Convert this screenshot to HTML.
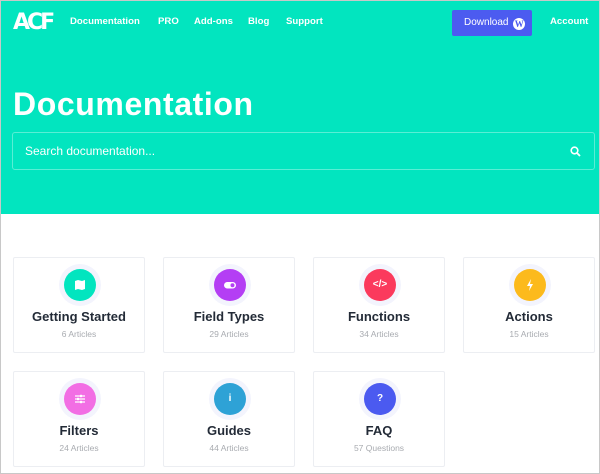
<!DOCTYPE html>
<html><head><meta charset="utf-8"><style>
*{box-sizing:border-box;margin:0;padding:0}
body{width:600px;height:474px;overflow:hidden;background:#fff;font-family:"Liberation Sans",sans-serif;position:relative}
.frame{position:absolute;inset:0;border:1px solid #c8c8c8;pointer-events:none;z-index:5}
.hero{position:absolute;left:0;top:0;width:600px;height:214px;background:#02e5bf}
.logo{position:absolute;left:13px;top:10px;color:#fff;font-weight:900;font-size:22px;letter-spacing:-3px;font-family:"DejaVu Sans",sans-serif}
.nav{position:absolute;top:16px;color:#fff;font-weight:bold;font-size:9.6px}
.dl{position:absolute;left:452px;top:10px;width:80px;height:26px;background:#4c5bf0;border-radius:2px;color:#fff;font-size:10px;line-height:26px;padding-left:12px}
.dl span{display:inline-block;width:12px;height:12px;border-radius:50%;background:#fff;color:#4c5bf0;font-size:9px;font-weight:bold;line-height:12px;text-align:center;vertical-align:-2px;margin-left:2px;font-family:"Liberation Serif",serif}
h1{position:absolute;left:13px;top:86px;color:#fff;font-size:32px;font-weight:bold;letter-spacing:0.6px}
.search{position:absolute;left:12px;top:132px;width:583px;height:38px;border:1px solid rgba(255,255,255,.35);border-radius:3px;color:#fff;font-size:12px;line-height:36px;padding-left:12px}
.search svg{position:absolute;right:13px;top:13px}
.card{position:absolute;width:132px;height:96px;border:1px solid #eceef2;border-radius:2px;text-align:center}
.halo{position:absolute;left:45px;top:6px;width:42px;height:42px;border-radius:50%;background:#f3f4fd}
.ic{position:absolute;left:5px;top:5px;width:32px;height:32px;border-radius:50%;color:#fff;font-size:10px;font-weight:bold;line-height:32px;text-align:center}
.ic svg{position:absolute;left:10px;top:10px}
.t{position:absolute;left:0;right:0;top:51px;font-size:13px;font-weight:bold;color:#232b37}
.s{position:absolute;left:0;right:0;top:71px;font-size:8.5px;color:#a8abb0}
</style></head><body>
<div class="hero">
<div class="logo">ACF</div>
<div class="nav" style="left:70px">Documentation</div>
<div class="nav" style="left:158px">PRO</div>
<div class="nav" style="left:194px">Add-ons</div>
<div class="nav" style="left:248px">Blog</div>
<div class="nav" style="left:286px">Support</div>
<div class="dl">Download <span>W</span></div>
<div class="nav" style="left:550px">Account</div>
<h1>Documentation</h1>
<div class="search">Search documentation...
<svg width="11" height="11" viewBox="0 0 11 11"><circle cx="4.5" cy="4.5" r="3.3" fill="none" stroke="#fff" stroke-width="1.6"/><path d="M7 7l3 3" stroke="#fff" stroke-width="1.8"/></svg></div>
</div>

<div class="card" style="left:13px;top:257px"><div class="halo"><div class="ic" style="background:#02e5bf"><svg width="12" height="12" viewBox="0 0 12 12"><path d="M1 2l3-1 4 1 3-1v9l-3 1-4-1-3 1z" fill="#fff"/></svg></div></div><div class="t">Getting Started</div><div class="s">6 Articles</div></div>
<div class="card" style="left:163px;top:257px"><div class="halo"><div class="ic" style="background:#b43ef4"><svg width="12" height="12" viewBox="0 0 12 12"><rect x="0" y="3" width="12" height="6.5" rx="3.25" fill="#fff"/><circle cx="8.5" cy="6.25" r="2" fill="#b43ef4"/></svg></div></div><div class="t">Field Types</div><div class="s">29 Articles</div></div>
<div class="card" style="left:313px;top:257px"><div class="halo"><div class="ic" style="background:#fb3a5d">&lt;/&gt;</div></div><div class="t">Functions</div><div class="s">34 Articles</div></div>
<div class="card" style="left:463px;top:257px"><div class="halo"><div class="ic" style="background:#fcba1c"><svg width="12" height="12" viewBox="0 0 12 12"><path d="M7 0L3 7h3l-1 5 4-7H6z" fill="#fff"/></svg></div></div><div class="t">Actions</div><div class="s">15 Articles</div></div>

<div class="card" style="left:13px;top:371px"><div class="halo"><div class="ic" style="background:#f26ee4"><svg width="12" height="12" viewBox="0 0 12 12"><path d="M1 3h10M1 6h10M1 9h10" stroke="#fff" stroke-width="1.2"/><rect x="6" y="1.8" width="2" height="2.4" fill="#fff"/><rect x="3" y="4.8" width="2" height="2.4" fill="#fff"/><rect x="6" y="7.8" width="2" height="2.4" fill="#fff"/></svg></div></div><div class="t">Filters</div><div class="s">24 Articles</div></div>
<div class="card" style="left:163px;top:371px"><div class="halo"><div class="ic" style="background:#2ea2d6">i</div></div><div class="t">Guides</div><div class="s">44 Articles</div></div>
<div class="card" style="left:313px;top:371px"><div class="halo"><div class="ic" style="background:#4b5af0">?</div></div><div class="t">FAQ</div><div class="s">57 Questions</div></div>
<div class="frame"></div>
</body></html>
